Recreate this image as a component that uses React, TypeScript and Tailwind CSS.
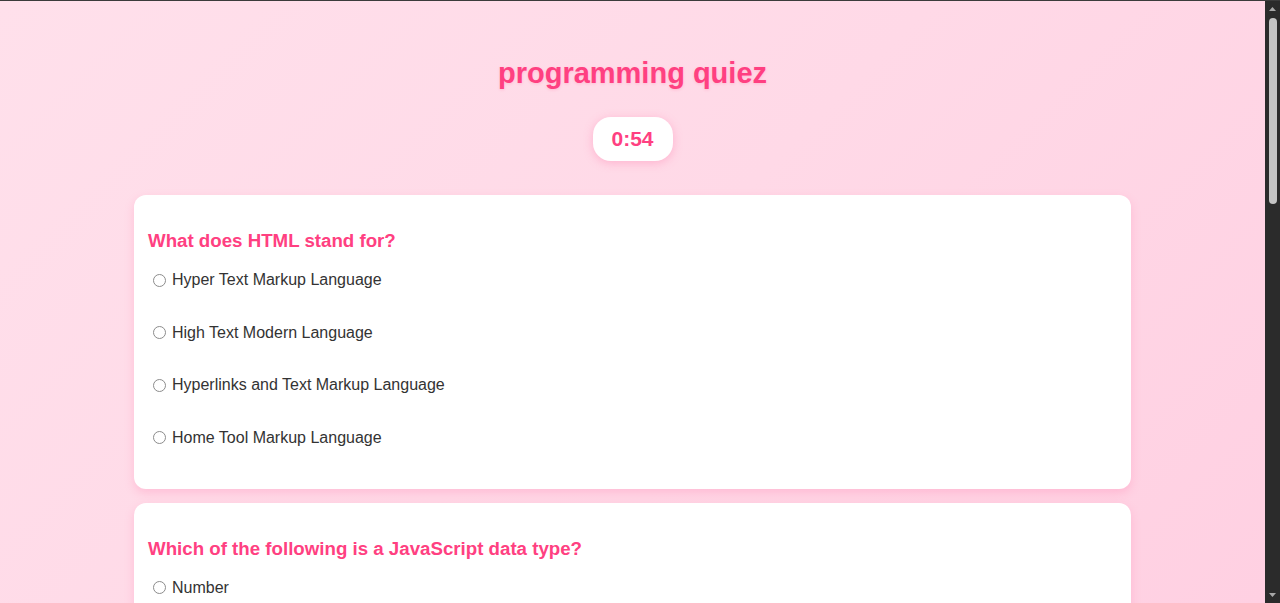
import React from "react";

type Q = { q: string; options: string[] };

const questions: Q[] = [
  {
    q: "What does HTML stand for?",
    options: [
      "Hyper Text Markup Language",
      "High Text Modern Language",
      "Hyperlinks and Text Markup Language",
      "Home Tool Markup Language",
    ],
  },
  {
    q: "Which of the following is a JavaScript data type?",
    options: ["Number", "Float", "Character", "Decimal"],
  },
];

function ScrollBar() {
  return (
    <div className="w-[15px] shrink-0 bg-[#2b2b2b] flex flex-col items-center">
      <svg width="15" height="15" viewBox="0 0 15 15" className="shrink-0">
        <path d="M4 10h7L7.5 6z" fill="#a8a8a8" />
      </svg>
      <div className="flex-1 w-full flex flex-col pl-[4px] pr-[3px]">
        <div className="mt-[2px] h-[186px] w-[8px] rounded-full bg-[#c4c4c4]" />
      </div>
      <svg width="15" height="15" viewBox="0 0 15 15" className="shrink-0">
        <path d="M4 5h7L7.5 9z" fill="#a8a8a8" />
      </svg>
    </div>
  );
}

export default function App() {
  return (
    <div className="h-[603px] flex flex-col border-t border-[#3b3b3b] bg-[#3b3b3b] font-['Comic_Sans_MS','Liberation_Sans',sans-serif]">
      <div className="flex-1 min-h-0 flex">
        <main className="flex-1 min-w-0 overflow-hidden bg-[linear-gradient(135deg,#ffe0eb_0%,#ffd9e7_50%,#ffd0e2_100%)]">
          <div className="flex flex-col items-center pt-[53px] pb-[80px]">
            <h1 className="text-[29px] leading-[38px] font-bold text-[#ff4081] [text-shadow:0_1px_3px_rgba(255,64,129,0.2)]">
              programming quiez
            </h1>
            <div className="mt-[25px] h-[44px] w-[80px] rounded-[18px] bg-white flex items-center justify-center text-[21px] font-bold text-[#ff4081] shadow-[0_2px_10px_rgba(255,105,160,0.35)]">
              0:54
            </div>
            <div className="mt-[34px] w-[997px] flex flex-col gap-[14px]">
              {questions.map((item, qi) => (
                <div
                  key={qi}
                  className="bg-white rounded-[12px] pt-[35px] pb-[41px] px-[14px] shadow-[0_4px_10px_rgba(255,120,170,0.28)]"
                >
                  <h3 className="text-[18.7px] leading-[22px] font-bold text-[#ff4081]">
                    {item.q}
                  </h3>
                  <div className="mt-[18px] flex flex-col gap-[32.67px]">
                    {item.options.map((opt, oi) => (
                      <label
                        key={oi}
                        className="flex items-center h-[20px] text-[16px] leading-[20px] text-[#333333]"
                      >
                        <input
                          type="radio"
                          name={`q${qi}`}
                          className="appearance-none shrink-0 ml-[5px] mr-[6px] w-[13px] h-[13px] rounded-full border border-[#8c8c8c] bg-white checked:border-[4px] checked:border-[#ff4081]"
                        />
                        <span>{opt}</span>
                      </label>
                    ))}
                  </div>
                </div>
              ))}
            </div>
          </div>
        </main>
        <ScrollBar />
      </div>
    </div>
  );
}
